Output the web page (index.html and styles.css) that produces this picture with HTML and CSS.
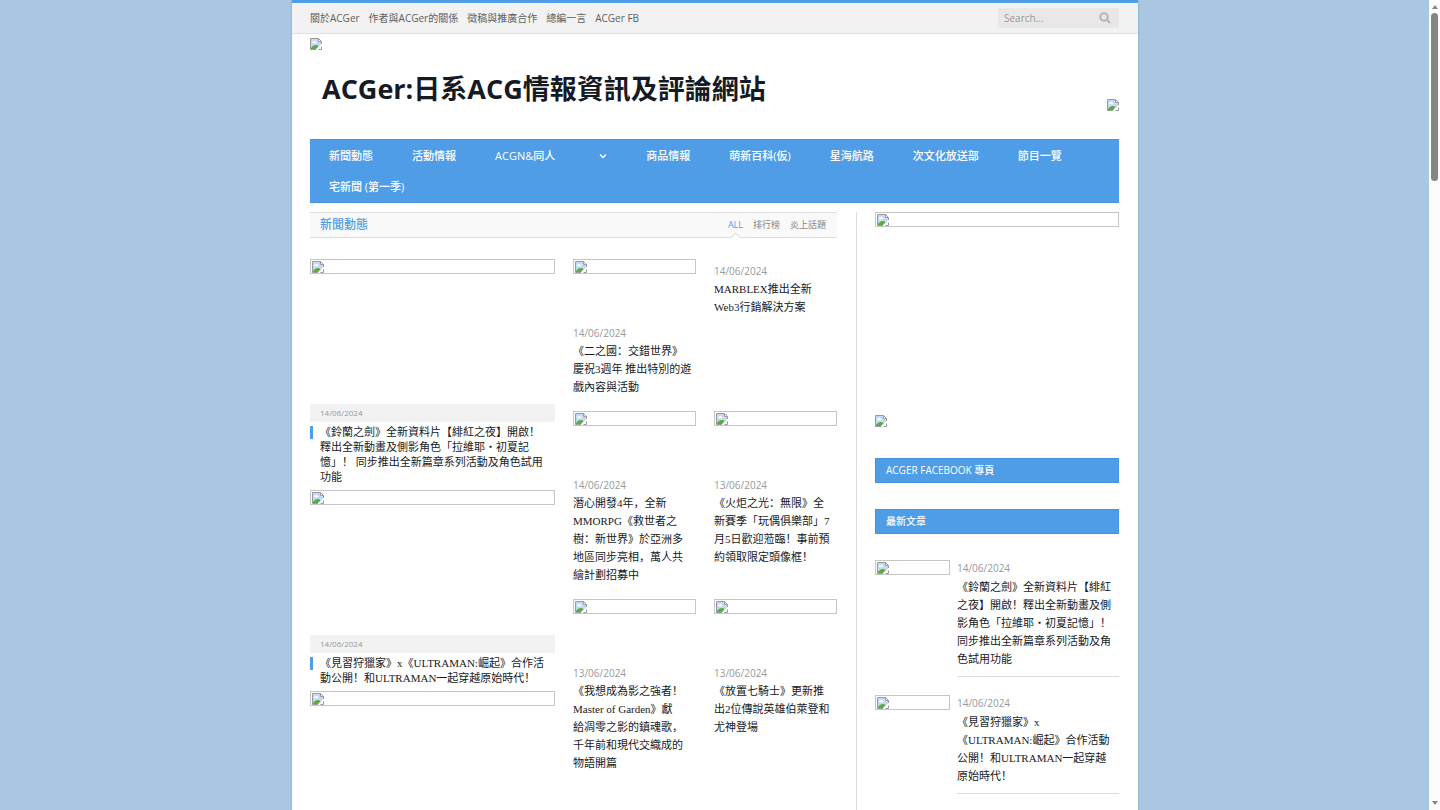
FILE: index.html
```html
<!DOCTYPE html>
<html lang="zh">
<head>
<meta charset="utf-8">
<meta name="viewport" content="width=device-width, initial-scale=1">
<title>ACGer:日系ACG情報資訊及評論網站</title>
<link rel="stylesheet" href="styles.css">
</head>
<body>
<svg class="defs" aria-hidden="true">
  <symbol id="missing" viewBox="0 0 12 12">
    <path d="M.5.5h8l3 3v8H.5z" fill="#fff"/>
    <path d="M1 1h7v3h3v3L6 11H1z" fill="#c3d9f5"/>
    <path d="M2 4.500c0-1 1-1 1.300-.8.500-1.400 2.400-1 2.400.3 1 0 1 1.200.3 1.200H2.700C2.200 5.200 2 5 2 4.500z" fill="#fff"/>
    <path d="M1 11V10c1.500-2.200 3.500-3.300 5.500-3 1 .2 1.500.8 2 1.300L6 11z" fill="#5aac3f"/>
    <path d="M5.700 12 11.700 6v2L8 12z" fill="#fff"/>
    <path d="M.5 11.500V.5h8l3 3V6M8.500.5v3h3M.5 11.500H6M8.500 11.500h3V8.500" fill="none" stroke="#9a9a9a"/>
  </symbol>
</svg>
<div class="page">
  <div class="site">
    <div class="topbar">
      <nav class="toplinks" aria-label="網站">
        <a href="#">關於ACGer</a><a href="#">作者與ACGer的關係</a><a href="#">徵稿與推廣合作</a><a href="#">總編一言</a><a href="#">ACGer FB</a>
      </nav>
      <form class="search" role="search">
        <input type="search" aria-label="Search" placeholder="Search...">
        <button type="button" aria-label="Submit search"><svg viewBox="0 0 12 12"><circle cx="5" cy="5" r="3.700"/><path d="M7.800 7.800 11 11"/></svg></button>
      </form>
    </div>
    <header class="masthead">
      <div class="brand">
        <a class="logo" href="#" aria-label="首頁"><svg class="icon"><use href="#missing"/></svg></a>
        <h1>ACGer:日系ACG情報資訊及評論網站</h1>
      </div>
      <svg class="icon"><use href="#missing"/></svg>
    </header>
    <nav class="mainnav" aria-label="主選單">
      <a href="#">新聞動態</a><a href="#">活動情報</a><a class="has-menu" href="#">ACGN&amp;同人<svg viewBox="0 0 8 6"><path d="M1 1.500 4 4.500 7 1.500"/></svg></a><a href="#">商品情報</a><a href="#">萌新百科(仮)</a><a href="#">星海航路</a><a href="#">次文化放送部</a><a href="#">節目一覽</a><a href="#">宅新聞 (第一季)</a>
    </nav>
    <div class="content">
      <main>
        <div class="section-head">
          <h2>新聞動態</h2>
          <div class="tabs"><a class="active" href="#">ALL</a><a href="#">排行榜</a><a href="#">炎上話題</a></div>
        </div>
        <div class="news">
          <div class="features">
            <article class="feature">
              <div class="media"><div class="missing"><svg class="icon"><use href="#missing"/></svg></div></div>
              <time>14/06/2024</time>
              <h3><a href="#">《鈴蘭之劍》全新資料片【緋紅之夜】開啟！<br>釋出全新動畫及側影角色「拉維耶・初夏記<br>憶」！ 同步推出全新篇章系列活動及角色試用<br>功能</a></h3>
            </article>
            <article class="feature">
              <div class="media"><div class="missing"><svg class="icon"><use href="#missing"/></svg></div></div>
              <time>14/06/2024</time>
              <h3><a href="#">《見習狩獵家》x《ULTRAMAN:崛起》合作活<br>動公開！和ULTRAMAN一起穿越原始時代！</a></h3>
            </article>
            <article class="feature">
              <div class="media"><div class="missing"><svg class="icon"><use href="#missing"/></svg></div></div>
            </article>
          </div>
          <div class="cards">
            <article class="card">
              <div class="media"><div class="missing"><svg class="icon"><use href="#missing"/></svg></div></div>
              <time>14/06/2024</time>
              <h3><a href="#">《二之國：交錯世界》<br>慶祝3週年 推出特別的遊<br>戲內容與活動</a></h3>
            </article>
            <article class="card text-only">
              <time>14/06/2024</time>
              <h3><a href="#">MARBLEX推出全新<br>Web3行銷解決方案</a></h3>
            </article>
            <article class="card">
              <div class="media"><div class="missing"><svg class="icon"><use href="#missing"/></svg></div></div>
              <time>14/06/2024</time>
              <h3><a href="#">潛心開發4年，全新<br>MMORPG《救世者之<br>樹：新世界》於亞洲多<br>地區同步亮相，萬人共<br>繪計劃招募中</a></h3>
            </article>
            <article class="card">
              <div class="media"><div class="missing"><svg class="icon"><use href="#missing"/></svg></div></div>
              <time>13/06/2024</time>
              <h3><a href="#">《火炬之光：無限》全<br>新賽季「玩偶俱樂部」7<br>月5日歡迎蒞臨！事前預<br>約領取限定頭像框！</a></h3>
            </article>
            <article class="card">
              <div class="media"><div class="missing"><svg class="icon"><use href="#missing"/></svg></div></div>
              <time>13/06/2024</time>
              <h3><a href="#">《我想成為影之強者！<br>Master of Garden》獻<br>給凋零之影的鎮魂歌，<br>千年前和現代交織成的<br>物語開篇</a></h3>
            </article>
            <article class="card">
              <div class="media"><div class="missing"><svg class="icon"><use href="#missing"/></svg></div></div>
              <time>13/06/2024</time>
              <h3><a href="#">《放置七騎士》更新推<br>出2位傳說英雄伯萊登和<br>尤神登場</a></h3>
            </article>
          </div>
        </div>
      </main>
      <aside>
        <div class="banner"><div class="missing"><svg class="icon"><use href="#missing"/></svg></div></div>
        <svg class="icon"><use href="#missing"/></svg>
        <h2 class="first">ACGER FACEBOOK 專頁</h2>
        <h2>最新文章</h2>
        <article class="post">
          <div class="missing"><svg class="icon"><use href="#missing"/></svg></div>
          <div class="post-body">
            <time>14/06/2024</time>
            <h3><a href="#">《鈴蘭之劍》全新資料片【緋紅<br>之夜】開啟！釋出全新動畫及側<br>影角色「拉維耶・初夏記憶」！<br>同步推出全新篇章系列活動及角<br>色試用功能</a></h3>
          </div>
        </article>
        <article class="post">
          <div class="missing"><svg class="icon"><use href="#missing"/></svg></div>
          <div class="post-body">
            <time>14/06/2024</time>
            <h3><a href="#">《見習狩獵家》x<br>《ULTRAMAN:崛起》合作活動<br>公開！和ULTRAMAN一起穿越<br>原始時代！</a></h3>
          </div>
        </article>
      </aside>
    </div>
  </div>
</div>
<div class="scrollbar" aria-hidden="true"><i class="up"></i><i class="thumb"></i><i class="down"></i></div>
</body>
</html>
```

FILE: styles.css
```css
* { box-sizing: border-box; }
html, body { height: 100%; }
body {
  margin: 0;
  overflow: hidden;
  background: #a9c7e3;
  color: #161a25;
  font: 10px/14px "Open Sans", "Noto Sans CJK TC", sans-serif;
  text-spacing-trim: space-all;
}
a { color: inherit; text-decoration: none; }
h1, h2, h3 { margin: 0; font-weight: 400; }
.defs { position: absolute; width: 0; height: 0; }
.icon { display: block; flex: none; width: 12px; height: 12px; }
.missing { height: 15px; padding: 1px; border: 1px solid #c6c6c6; }

.page { height: 100%; overflow: hidden; padding-right: 10px; }
.site {
  max-width: 846px;
  min-height: 100%;
  margin: 0 auto;
  border-top: 3px solid #4f9de6;
  background: #fff;
  box-shadow: 0 0 2px #7d9fc4;
}

.topbar {
  display: flex;
  align-items: center;
  justify-content: space-between;
  height: 31px;
  padding: 0 19px 0 18px;
  border-bottom: 1px solid #e2e2e2;
  background: #f2f2f2;
}
.toplinks { display: flex; gap: 9px; color: #606060; }
.search { display: flex; width: 121px; height: 20px; background: #e8e8e8; }
.search input {
  flex: 1;
  min-width: 0;
  padding: 0 6px;
  border: 0;
  outline: 0;
  background: none;
  font: inherit;
}
.search input::placeholder { color: #999; }
.search button { width: 28px; padding: 0 8px; border: 0; background: none; }
.search svg { display: block; width: 12px; height: 12px; fill: none; stroke: #b3b3b8; stroke-width: 2; }

.masthead {
  display: flex;
  justify-content: space-between;
  align-items: flex-end;
  padding: 4px 19px 28px 18px;
}
.masthead h1 { padding: 20px 12px 14px; font-size: 27px; line-height: 38px; font-weight: 700; }
.brand { margin-bottom: -11px; }
.logo { display: block; width: 12px; }

.mainnav {
  display: flex;
  flex-wrap: wrap;
  column-gap: 1px;
  margin: 0 19px 0 18px;
  border: 1px solid #4494e2;
  border-width: 1px 0;
  background: #4f9de6;
  color: #fff;
  font-size: 11px;
  font-weight: 500;
  line-height: 31px;
}
.mainnav a { padding: 0 19px; }
.mainnav .has-menu { display: flex; align-items: center; gap: 44px; }
.has-menu svg { width: 8px; height: 6px; fill: none; stroke: #fff; stroke-width: 1.5; }

.content {
  display: grid;
  grid-template-columns: minmax(0, 1fr) 263px;
  gap: 19px;
  padding: 9px 19px 0 18px;
}
.section-head {
  display: flex;
  justify-content: space-between;
  align-items: center;
  height: 26px;
  padding: 0 11px 0 10px;
  border: 1px solid #dedede;
  border-width: 1px 0;
  background: #f9f9f9;
}
.section-head h2 { color: #4f9de6; font-size: 12px; font-weight: 500; }
.tabs { display: flex; align-self: stretch; gap: 10px; color: #888; font-size: 9px; line-height: 24px; }
.tabs .active { position: relative; color: #4f9de6; }
.tabs .active::after {
  content: "";
  position: absolute;
  left: 50%;
  bottom: -4px;
  width: 6px;
  height: 6px;
  margin-left: -3px;
  border: 1px solid #dedede;
  border-width: 1px 0 0 1px;
  background: #fff;
  transform: rotate(45deg);
}

.news { display: grid; grid-template-columns: 245fr 264fr; gap: 18px; padding-top: 21px; }
time { display: block; color: #999; }
h3 { font-family: "Roboto Slab", "Liberation Serif", "Noto Sans CJK SC", sans-serif; font-size: 11px; white-space: nowrap; }
.feature .media { height: 145px; }
.feature time { padding: 0 10px; background: #f2f2f2; font-size: 8px; line-height: 18px; }
.feature h3 { position: relative; margin: 3px 0 5px; padding-left: 10px; line-height: 15px; }
.feature h3::before {
  content: "";
  position: absolute;
  left: 0;
  top: 1px;
  width: 3px;
  height: 13px;
  background: #4f9de6;
}
.cards { display: grid; grid-template-columns: 1fr 1fr; align-content: start; gap: 15px 18px; }
.card .media { height: 66px; }
.card time { line-height: 17px; }
.card h3 { line-height: 18px; }
.text-only { padding-top: 4px; }

aside { padding-left: 18px; border-left: 1px solid #dedede; }
.banner { height: 203px; }
aside h2 {
  margin-bottom: 26px;
  padding: 0 10px;
  border: 1px solid #4494e2;
  background: #4f9de6;
  color: #fff;
  font-size: 10px;
  line-height: 23px;
  font-weight: 500;
}
aside .first { margin-top: 31px; }
.post { display: grid; grid-template-columns: 75px minmax(0, 1fr); gap: 7px; margin-bottom: 18px; }
.post-body { padding: 1px 0 8px; border-bottom: 1px solid #dcdcdc; }
.post h3 { padding-top: 3px; line-height: 18px; }

.scrollbar {
  position: fixed;
  inset: 0 0 0 auto;
  display: flex;
  flex-direction: column;
  align-items: center;
  width: 11px;
  padding: 5px 0;
  background: #fcfcfc;
}
.scrollbar .up, .scrollbar .down { border: 3px solid transparent; }
.scrollbar .up { border-top: 0; border-bottom: 4px solid #858585; }
.scrollbar .down { margin-top: auto; border-bottom: 0; border-top: 4px solid #858585; }
.scrollbar .thumb { width: 7px; height: 21%; margin-top: 4px; border-radius: 4px; background: #858585; }
```
